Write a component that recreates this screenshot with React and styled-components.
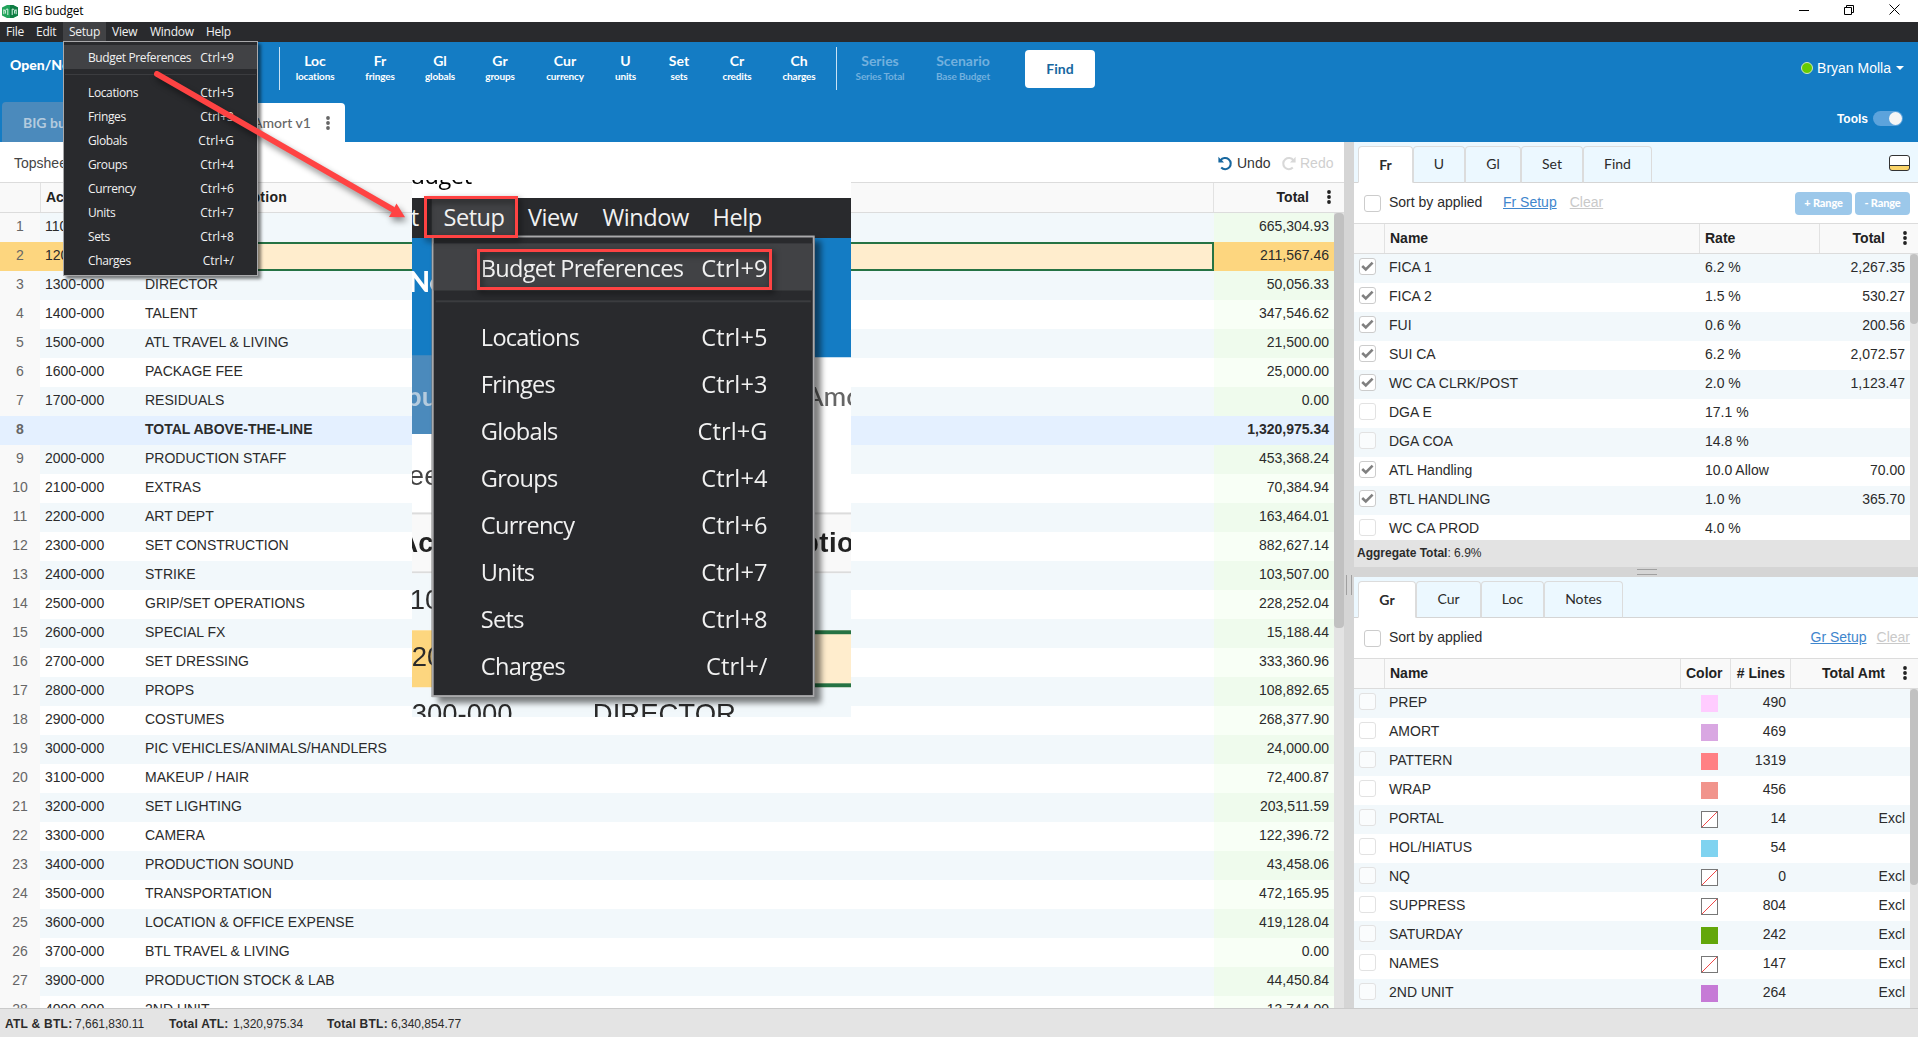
import styled, { createGlobalStyle, css } from "styled-components";

//data
const menuItems = [
  ["Locations", "Ctrl+5"],
  ["Fringes", "Ctrl+3"],
  ["Globals", "Ctrl+G"],
  ["Groups", "Ctrl+4"],
  ["Currency", "Ctrl+6"],
  ["Units", "Ctrl+7"],
  ["Sets", "Ctrl+8"],
  ["Charges", "Ctrl+/"],
];

const shortcuts = [
  ["Loc", "locations", 40],
  ["Fr", "fringes", 30],
  ["Gl", "globals", 30],
  ["Gr", "groups", 30],
  ["Cur", "currency", 40],
  ["U", "units", 21],
  ["Set", "sets", 26],
  ["Cr", "credits", 30],
  ["Ch", "charges", 34],
];

const accounts = [
  ["1100-000", "STORY", "665,304.93"],
  ["1200-000", "PRODUCER", "211,567.46"],
  ["1300-000", "DIRECTOR", "50,056.33"],
  ["1400-000", "TALENT", "347,546.62"],
  ["1500-000", "ATL TRAVEL & LIVING", "21,500.00"],
  ["1600-000", "PACKAGE FEE", "25,000.00"],
  ["1700-000", "RESIDUALS", "0.00"],
  ["", "TOTAL ABOVE-THE-LINE", "1,320,975.34"],
  ["2000-000", "PRODUCTION STAFF", "453,368.24"],
  ["2100-000", "EXTRAS", "70,384.94"],
  ["2200-000", "ART DEPT", "163,464.01"],
  ["2300-000", "SET CONSTRUCTION", "882,627.14"],
  ["2400-000", "STRIKE", "103,507.00"],
  ["2500-000", "GRIP/SET OPERATIONS", "228,252.04"],
  ["2600-000", "SPECIAL FX", "15,188.44"],
  ["2700-000", "SET DRESSING", "333,360.96"],
  ["2800-000", "PROPS", "108,892.65"],
  ["2900-000", "COSTUMES", "268,377.90"],
  ["3000-000", "PIC VEHICLES/ANIMALS/HANDLERS", "24,000.00"],
  ["3100-000", "MAKEUP / HAIR", "72,400.87"],
  ["3200-000", "SET LIGHTING", "203,511.59"],
  ["3300-000", "CAMERA", "122,396.72"],
  ["3400-000", "PRODUCTION SOUND", "43,458.06"],
  ["3500-000", "TRANSPORTATION", "472,165.95"],
  ["3600-000", "LOCATION & OFFICE EXPENSE", "419,128.04"],
  ["3700-000", "BTL TRAVEL & LIVING", "0.00"],
  ["3900-000", "PRODUCTION STOCK & LAB", "44,450.84"],
  ["4000-000", "2ND UNIT", "13,744.00"],
];

const fringes = [
  [true, "FICA 1", "6.2 %", "2,267.35"],
  [true, "FICA 2", "1.5 %", "530.27"],
  [true, "FUI", "0.6 %", "200.56"],
  [true, "SUI CA", "6.2 %", "2,072.57"],
  [true, "WC CA CLRK/POST", "2.0 %", "1,123.47"],
  [false, "DGA E", "17.1 %", ""],
  [false, "DGA COA", "14.8 %", ""],
  [true, "ATL Handling", "10.0 Allow", "70.00"],
  [true, "BTL HANDLING", "1.0 %", "365.70"],
  [false, "WC CA PROD", "4.0 %", ""],
];

const groups = [
  ["PREP", "#ffccff", "490", ""],
  ["AMORT", "#d9a7e2", "469", ""],
  ["PATTERN", "#ff8084", "1319", ""],
  ["WRAP", "#f1948c", "456", ""],
  ["PORTAL", null, "14", "Excl"],
  ["HOL/HIATUS", "#7fd3f0", "54", ""],
  ["NQ", null, "0", "Excl"],
  ["SUPPRESS", null, "804", "Excl"],
  ["SATURDAY", "#63a70a", "242", "Excl"],
  ["NAMES", null, "147", "Excl"],
  ["2ND UNIT", "#c67ad6", "264", "Excl"],
];

//styles
const GlobalStyle = createGlobalStyle`
  * {
    box-sizing: border-box;
  }
  body {
    margin: 0;
    overflow: hidden;
    font-family: "Liberation Sans", Arial, sans-serif;
    font-size: 14px;
    color: #2b2b2b;
  }
`;

const Screen = styled.div`
  position: relative;
  display: flex;
  flex-direction: column;
  width: 1918px;
  height: 1037px;
  overflow: hidden;
  background: #fff;
`;

const TitleBar = styled.div`
  display: flex;
  align-items: center;
  height: 22px;
  flex: none;
  padding-left: 2px;
  background: #fff;
  color: #000;
  font-family: "Open Sans", sans-serif;
  font-size: 12px;
  letter-spacing: -0.22px;
  white-space: nowrap;
  svg {
    display: block;
  }
`;

const TitleText = styled.span`
  margin-left: 5px;
  line-height: 22px;
`;

const WindowControls = styled.div`
  display: flex;
  align-items: center;
  gap: 35px;
  margin: 0 18px 3px auto;
`;

const MenuBarRow = styled.div`
  position: relative;
  z-index: 5;
  display: flex;
  height: 20px;
  flex: none;
  background: #292a2d;
  color: #f1f1f1;
  font-family: "Open Sans", sans-serif;
  font-size: 12px;
  letter-spacing: -0.25px;
`;

const MenuBarItem = styled.div`
  width: ${(p) => p.$w}px;
  padding-left: 6px;
  line-height: 19px;
  white-space: nowrap;
  background: ${(p) => (p.$open ? "#414245" : "transparent")};
`;

const MenuBox = styled.div`
  position: absolute;
  left: 63px;
  top: 19px;
  width: 195px;
  height: 235px;
  padding-top: 3px;
  border: 1px solid #a9a9ab;
  background: #292a2d;
  box-shadow: 3px 3px 3px rgba(0, 0, 0, 0.5);
`;

const MenuRow = styled.div`
  display: flex;
  justify-content: space-between;
  height: 24px;
  padding: 0 23px 0 24px;
  line-height: 25px;
  letter-spacing: -0.38px;
  white-space: nowrap;
  background: ${(p) => (p.$active ? "#414245" : "transparent")};
  span:last-child {
    letter-spacing: 0.05px;
  }
`;

const MenuRule = styled.div`
  height: 1px;
  margin: 5px 1px;
  background: #3b3c3f;
`;

const Header = styled.header`
  display: flex;
  flex-direction: column;
  justify-content: space-between;
  height: 100px;
  flex: none;
  background: #147cc4;
  color: #fff;
  font-family: Lato, sans-serif;
`;

const ToolRow = styled.div`
  display: flex;
  padding-top: 5px;
`;

const OpenNew = styled.div`
  width: 279px;
  height: 43px;
  flex: none;
  padding-left: 10px;
  line-height: 36px;
  font-size: 14px;
  font-weight: 900;
`;

const Tools = styled.div`
  display: flex;
  gap: 30px;
  padding: 0 20px 0 15px;
  height: 43px;
  border-left: 1px solid #c9e2f4;
  ${(p) =>
    p.$dim &&
    css`
      padding: 0 35px 0 17px;
      color: #72b0de;
    `}
`;

const Tool = styled.div`
  display: flex;
  flex-direction: column;
  align-items: center;
  width: ${(p) => p.$w}px;
  padding-top: 5px;
  white-space: nowrap;
  b {
    font-size: 14px;
    line-height: 18px;
  }
  span {
    font-size: 10px;
    line-height: 13px;
    font-weight: 700;
    letter-spacing: -0.15px;
  }
`;

const FindButton = styled.button`
  width: 70px;
  height: 38px;
  margin-top: 3px;
  padding: 0 0 2px;
  border: 0;
  border-radius: 4px;
  background: #fff;
  color: #17679f;
  font: 700 14px Lato, sans-serif;
`;

const User = styled.div`
  display: flex;
  align-items: center;
  gap: 5px;
  height: 20px;
  margin: 11px 14px 0 auto;
  font-family: "Liberation Sans", sans-serif;
  font-size: 14px;
`;

const Dot = styled.i`
  width: 12px;
  height: 12px;
  margin-right: -1px;
  border: 1px solid #cfe8c0;
  border-radius: 50%;
  background: #66cc00;
`;

const Caret = styled.i`
  border: 4px solid transparent;
  border-top: 4px solid #fff;
  border-bottom: 0;
`;

const TabRow = styled.div`
  display: flex;
  align-items: flex-end;
  padding-left: 2px;
`;

const BudgetTab = styled.div`
  display: flex;
  flex: none;
  justify-content: space-between;
  align-items: center;
  width: ${(p) => p.$w}px;
  height: ${(p) => (p.$active ? 39 : 40)}px;
  padding: 0 15px 0 ${(p) => p.$pad}px;
  border-radius: 4px 4px 0 0;
  background: ${(p) => (p.$active ? "#fff" : "#4b8abc")};
  color: ${(p) => (p.$active ? "#666" : "#b4cbde")};
  font-size: 14px;
  font-weight: ${(p) => (p.$active ? 500 : 700)};
  white-space: nowrap;
`;

const ToolsSwitch = styled.div`
  display: flex;
  align-items: center;
  gap: 5px;
  margin: 0 15px 16px auto;
  font: bold 12px "Liberation Sans", sans-serif;
`;

const Switch = styled.span`
  display: flex;
  justify-content: flex-end;
  width: 30px;
  height: 15px;
  padding: 1px;
  border-radius: 8px;
  background: #5ca3dc;
  &::after {
    content: "";
    width: 13px;
    height: 13px;
    border-radius: 50%;
    background: #f5f5f5;
  }
`;

const Main = styled.main`
  display: flex;
  height: 866px;
  flex: none;
`;

const Ledger = styled.section`
  width: ${(p) => p.$w}px;
  flex: none;
  height: 866px;
  overflow: hidden;
`;

const LedgerTop = styled.div`
  display: flex;
  align-items: center;
  height: 40px;
  padding: 2px 10px 0 14px;
  color: #444;
`;

const History = styled.span`
  display: flex;
  align-items: center;
  gap: 4px;
  width: ${(p) => p.$w}px;
  color: ${(p) => (p.$off ? "#cfcfcf" : "#333")};
  &:first-of-type {
    margin-left: auto;
  }
`;

const TableBody = styled.div`
  display: flex;
  height: ${(p) => p.$h}px;
  overflow: hidden;
`;

const Rows = styled.div`
  flex: 1;
`;

const Scroll = styled.div`
  width: ${(p) => p.$w}px;
  background: #e3e3e3;
  &::before {
    content: "";
    display: block;
    height: ${(p) => p.$thumb}px;
    border-radius: 4px;
    background: #c1c1c1;
  }
`;

const headRow = css`
  display: grid;
  height: 31px;
  border-top: 1px solid #dcdcdc;
  border-bottom: 1px solid #dcdcdc;
  background: #f9f9f9;
  font-weight: bold;
  color: #222;
`;

const HeadCell = styled.div`
  display: flex;
  align-items: center;
  justify-content: ${(p) => (p.$right ? "flex-end" : "flex-start")};
  gap: 18px;
  padding: 0 ${(p) => p.$pr ?? 5}px 1px 5px;
  border-right: 1px solid #e2e2e2;
  letter-spacing: ${(p) => p.$ls ?? 0}px;
  white-space: nowrap;
  &:last-child {
    border-right: 0;
  }
`;

const ledgerCols = css`
  grid-template-columns: 40px 100px 1fr ${(p) => (p.$narrow ? "" : "120px")};
`;

const LedgerHead = styled.div`
  ${headRow}
  grid-template-columns: 41px 99px 1fr ${(p) => (p.$narrow ? "" : "130px")};
`;

const LedgerRow = styled.div`
  display: grid;
  ${ledgerCols}
  height: 29px;
  line-height: 26px;
  background: ${(p) => (p.$odd ? "#f2f8fb" : "#fff")};
  > div {
    padding: 0 5px;
    white-space: nowrap;
    overflow: hidden;
  }
  > div:nth-child(1) {
    padding: 0;
    text-align: center;
    color: #666;
    background: #f9f9f9;
  }
  > div:nth-child(4) {
    text-align: right;
    background: ${(p) => (p.$odd ? "#effbed" : "#f8fff6")};
  }
  ${(p) =>
    p.$total &&
    css`
      font-weight: bold;
      > div:nth-child(n) {
        background: #e4f0ff;
      }
    `}
  ${(p) =>
    p.$picked &&
    css`
      > div:nth-child(n) {
        background: #fdd67f;
      }
      > div:nth-child(3) {
        padding-left: 3px;
        border: 2px solid #267344;
        line-height: 22px;
        background: #ffedcd;
      }
    `}
`;

const VSplit = styled.div`
  display: flex;
  justify-content: center;
  align-items: flex-start;
  width: 10px;
  flex: none;
  padding-top: 433px;
  background: #d5d5d5;
  &::before {
    content: "";
    width: 4px;
    height: 20px;
    border: solid #a0a0a0;
    border-width: 0 1px;
  }
`;

const HSplit = styled.div`
  display: flex;
  justify-content: center;
  align-items: center;
  height: 10px;
  padding-left: 22px;
  background: #d5d5d5;
  &::before {
    content: "";
    width: 20px;
    height: 4px;
    border: solid #a0a0a0;
    border-width: 1px 0;
  }
`;

const Side = styled.aside`
  width: 564px;
  height: 866px;
  overflow: hidden;
`;

const SideTabs = styled.div`
  display: flex;
  align-items: flex-end;
  height: 41px;
  padding-left: 4px;
  background: #ecf8ff;
  box-shadow: inset 0 -1px #d5d5d5;
  font-family: Lato, sans-serif;
`;

const SideTab = styled.div`
  width: ${(p) => p.$w}px;
  height: 37px;
  border: 1px solid #dcdcdc;
  border-radius: 4px 4px 0 0;
  border-bottom-color: ${(p) => (p.$active ? "#fff" : "#d5d5d5")};
  background: ${(p) => (p.$active ? "#fff" : "transparent")};
  font-weight: ${(p) => (p.$active ? 700 : 400)};
  line-height: ${(p) => (p.$active ? 35 : 34)}px;
  text-align: center;
`;

const LayoutIcon = styled.div`
  width: 21px;
  height: 16px;
  margin: 0 8px 12px auto;
  border: 1px solid #333;
  border-radius: 3px;
  background: linear-gradient(#fff 9px, #333 9px, #333 10px, #fbd468 10px);
`;

const SortRow = styled.div`
  display: flex;
  align-items: center;
  height: 40px;
  padding: 0 8px 0 10px;
  white-space: nowrap;
`;

const SortLabel = styled.span`
  width: 114px;
  margin-left: 8px;
  padding-bottom: 2px;
`;

const TextLink = styled.span`
  margin-left: ${(p) => p.$ml};
  padding-bottom: 2px;
  color: ${(p) => (p.$off ? "#c9c9c9" : "#3f86cd")};
  text-decoration: underline;
`;

const RangeButton = styled.button`
  width: ${(p) => p.$w}px;
  height: 23px;
  margin-left: ${(p) => p.$ml};
  padding: 0 0 1px;
  border: 0;
  border-radius: 4px;
  background: #9cc8ea;
  color: #fff;
  font: 900 11px Lato, sans-serif;
  letter-spacing: -0.15px;
`;

const Check = styled.span`
  display: flex;
  align-items: center;
  justify-content: center;
  width: 17px;
  height: 17px;
  flex: none;
  border: 1px solid ${(p) => (p.$strong ? "#ccc" : "#e2e2e2")};
  border-radius: 3px;
  background: ${(p) => (p.$strong ? "#fff" : "rgba(255, 255, 255, 0.6)")};
`;

const SideHead = styled.div`
  ${headRow}
  grid-template-columns: ${(p) => p.$cols};
`;

const SideRow = styled.div`
  display: grid;
  grid-template-columns: ${(p) => p.$cols};
  height: 29px;
  line-height: 26px;
  white-space: nowrap;
  &:nth-child(odd) {
    background: #f2f8fb;
  }
`;

const Cell = styled.div`
  padding: ${(p) => p.$pad ?? "0 5px"};
  text-align: ${(p) => (p.$right ? "right" : "left")};
`;

const Swatch = styled.i`
  display: block;
  width: 17px;
  height: 17px;
  background: ${(p) =>
    p.$color ??
    "linear-gradient(to bottom right, #fff 47%, #f04848 48%, #f04848 52%, #fff 53%)"};
  border: ${(p) => (p.$color ? "0" : "1px solid #777")};
`;

const Aggregate = styled.div`
  height: 27px;
  padding-left: 3px;
  line-height: 26px;
  font-size: 12px;
  background: #e3e3e3;
`;

const StatusBar = styled.footer`
  display: flex;
  height: 29px;
  flex: none;
  padding-left: 5px;
  border-top: 1px solid #cbcbcb;
  background: #e4e4e4;
  font-size: 12px;
  line-height: 30px;
`;

const Stat = styled.div`
  display: flex;
  width: ${(p) => p.$w}px;
  b {
    width: ${(p) => p.$label}px;
    letter-spacing: 0.25px;
  }
`;

const Callout = styled.div`
  position: absolute;
  left: 412px;
  top: 180px;
  width: 439px;
  height: 537px;
  overflow: hidden;
  background: #fff;
`;

const Magnified = styled.div`
  width: 277px;
  height: 287px;
  margin: -25.5px 0 0 -104px;
  overflow: hidden;
  transform: scale(1.964);
  transform-origin: 0 0;
`;

const RedBox = styled.div`
  position: absolute;
  left: ${(p) => p.$x}px;
  top: ${(p) => p.$y}px;
  width: ${(p) => p.$w}px;
  height: ${(p) => p.$h}px;
  border: 3px solid #ff4343;
  filter: drop-shadow(2px 3px 3px rgba(0, 0, 0, 0.6));
`;

const ArrowSvg = styled.svg`
  position: absolute;
  left: 140px;
  top: 60px;
  z-index: 6;
  filter: drop-shadow(2px 4px 3px rgba(0, 0, 0, 0.45));
`;

//icons
const AppLogo = () => (
  <svg width="16" height="13" viewBox="0 0 16 13">
    <path d="M0 2.5 5 0h6l5 2.5v8L11 13H5L0 10.5z" fill="#21a35b" />
    <path d="M8 0h3l5 2.5v8L11 13H8z" fill="#0f7c43" />
    <path
      d="M1.8 9.2V4.6l1.4 1.2 1.2-1.6 1.4-.2v6M10.2 10V4l1.4.2 1.2 1.6 1.4-1.2v4.6M3.4 6v2.6M12.6 6v2.6"
      fill="none"
      stroke="#d8f2e2"
      strokeWidth="1"
    />
  </svg>
);

const Dots = ({ color = "#222" }) => (
  <svg width="4" height="14" viewBox="0 0 4 14" fill={color}>
    <circle cx="2" cy="2" r="1.9" />
    <circle cx="2" cy="7" r="1.9" />
    <circle cx="2" cy="12" r="1.9" />
  </svg>
);

const TurnIcon = ({ color, flip }) => (
  <svg width="15" height="15" viewBox="0 0 15 15">
    <g transform={flip ? "translate(15 0) scale(-1 1)" : undefined}>
      <path
        d="M2.6 4.3A5.6 5.6 0 1 1 3.2 11.6"
        fill="none"
        stroke={color}
        strokeWidth="2.1"
      />
      <path d="M.4.8v5.6H6L4.2 4.6 2.2 2.7z" fill={color} />
    </g>
  </svg>
);

const Tick = () => (
  <svg width="13" height="11" viewBox="0 0 13 11">
    <path
      d="M1.2 5 4.8 8.4 11.6 1.6"
      fill="none"
      stroke="#808080"
      strokeWidth="2.6"
    />
  </svg>
);

//components
const MenuBar = () => (
  <MenuBarRow>
    <MenuBarItem $w={30}>File</MenuBarItem>
    <MenuBarItem $w={33}>Edit</MenuBarItem>
    <MenuBarItem $w={43} $open>
      Setup
    </MenuBarItem>
    <MenuBarItem $w={38}>View</MenuBarItem>
    <MenuBarItem $w={56}>Window</MenuBarItem>
    <MenuBarItem $w={40}>Help</MenuBarItem>
    <MenuBox>
      <MenuRow $active>
        <span>Budget Preferences</span>
        <span>Ctrl+9</span>
      </MenuRow>
      <MenuRule />
      {menuItems.map(([name, keys]) => (
        <MenuRow key={name}>
          <span>{name}</span>
          <span>{keys}</span>
        </MenuRow>
      ))}
    </MenuBox>
  </MenuBarRow>
);

const WindowTop = ({ narrow }) => (
  <>
    <TitleBar>
      <AppLogo />
      <TitleText>BIG budget</TitleText>
      {!narrow && (
        <WindowControls>
          <svg width="10" height="10">
            <path d="M0 5.5h10" stroke="#000" />
          </svg>
          <svg width="10" height="10" fill="none" stroke="#000">
            <path d="M.5 2.5h7v7h-7zM2.5 2.5v-2h7v7h-2" />
          </svg>
          <svg width="11" height="11">
            <path d="M.5.5l10 10M10.5.5l-10 10" stroke="#000" />
          </svg>
        </WindowControls>
      )}
    </TitleBar>
    <MenuBar />
    <Header>
      <ToolRow>
        <OpenNew>Open/New</OpenNew>
        {!narrow && (
          <>
            <Tools>
              {shortcuts.map(([code, label, w]) => (
                <Tool key={code} $w={w}>
                  <b>{code}</b>
                  <span>{label}</span>
                </Tool>
              ))}
            </Tools>
            <Tools $dim>
              <Tool $w={52}>
                <b>Series</b>
                <span>Series Total</span>
              </Tool>
              <Tool $w={54}>
                <b>Scenario</b>
                <span>Base Budget</span>
              </Tool>
            </Tools>
            <FindButton>Find</FindButton>
            <User>
              <Dot />
              Bryan Molla
              <Caret />
            </User>
          </>
        )}
      </ToolRow>
      <TabRow>
        <BudgetTab $w={150} $pad={21}>
          BIG budget
        </BudgetTab>
        <BudgetTab $active $w={193} $pad={101}>
          Amort v1
          {!narrow && <Dots color="#666" />}
        </BudgetTab>
        {!narrow && (
          <ToolsSwitch>
            Tools
            <Switch />
          </ToolsSwitch>
        )}
      </TabRow>
    </Header>
  </>
);

const LedgerPane = ({ rows, narrow }) => (
  <Ledger $w={narrow ? 400 : 1344}>
    <LedgerTop>
      Topsheet
      {!narrow && (
        <>
          <History $w={63}>
            <TurnIcon color="#17679f" />
            Undo
          </History>
          <History $w={53} $off>
            <TurnIcon color="#d8d8d8" flip />
            Redo
          </History>
        </>
      )}
    </LedgerTop>
    <LedgerHead $narrow={narrow}>
      <HeadCell />
      <HeadCell>Account</HeadCell>
      <HeadCell $ls={0.27}>Account Description</HeadCell>
      {!narrow && (
        <HeadCell $right $pr={13}>
          Total
          <Dots />
        </HeadCell>
      )}
    </LedgerHead>
    <TableBody $h={795}>
      <Rows>
        {rows.map(([account, name, total], i) => (
          <LedgerRow
            key={name}
            $narrow={narrow}
            $odd={i % 2 === 0}
            $picked={i === 1}
            $total={!account}
          >
            <div>{i + 1}</div>
            <div>{account}</div>
            <div>{name}</div>
            {!narrow && <div>{total}</div>}
          </LedgerRow>
        ))}
      </Rows>
      {!narrow && <Scroll $w={10} $thumb={415} />}
    </TableBody>
  </Ledger>
);

const fringeCols = "31px 315px 120px 1fr";
const groupCols = "31px 296px 50px 60px 1fr";

const FringePanel = () => (
  <>
    <SideTabs>
      <SideTab $w={55} $active>
        Fr
      </SideTab>
      <SideTab $w={52}>U</SideTab>
      <SideTab $w={56}>Gl</SideTab>
      <SideTab $w={62}>Set</SideTab>
      <SideTab $w={69}>Find</SideTab>
      <LayoutIcon />
    </SideTabs>
    <SortRow>
      <Check $strong />
      <SortLabel>Sort by applied</SortLabel>
      <TextLink $ml="0">Fr Setup</TextLink>
      <TextLink $ml="13px" $off>
        Clear
      </TextLink>
      <RangeButton $w={57} $ml="auto">
        + Range
      </RangeButton>
      <RangeButton $w={55} $ml="3px">
        - Range
      </RangeButton>
    </SortRow>
    <SideHead $cols={fringeCols}>
      <HeadCell />
      <HeadCell>Name</HeadCell>
      <HeadCell>Rate</HeadCell>
      <HeadCell $right $pr={11}>
        Total
        <Dots />
      </HeadCell>
    </SideHead>
    <TableBody $h={286}>
      <Rows>
        {fringes.map(([on, name, rate, total]) => (
          <SideRow key={name} $cols={fringeCols}>
            <Cell $pad="4px 5px">
              <Check $strong={on}>{on && <Tick />}</Check>
            </Cell>
            <Cell $pad="0 4px">{name}</Cell>
            <Cell>{rate}</Cell>
            <Cell $right>{total}</Cell>
          </SideRow>
        ))}
      </Rows>
      <Scroll $w={8} $thumb={70} />
    </TableBody>
    <Aggregate>
      <b>Aggregate Total</b>: 6.9%
    </Aggregate>
  </>
);

const GroupPanel = () => (
  <>
    <SideTabs>
      <SideTab $w={58} $active>
        Gr
      </SideTab>
      <SideTab $w={65}>Cur</SideTab>
      <SideTab $w={63}>Loc</SideTab>
      <SideTab $w={79}>Notes</SideTab>
    </SideTabs>
    <SortRow>
      <Check $strong />
      <SortLabel>Sort by applied</SortLabel>
      <TextLink $ml="auto">Gr Setup</TextLink>
      <TextLink $ml="10px" $off>
        Clear
      </TextLink>
    </SortRow>
    <SideHead $cols={groupCols}>
      <HeadCell />
      <HeadCell>Name</HeadCell>
      <HeadCell>Color</HeadCell>
      <HeadCell $right># Lines</HeadCell>
      <HeadCell $right $pr={11}>
        Total Amt
        <Dots />
      </HeadCell>
    </SideHead>
    <TableBody $h={319}>
      <Rows>
        {groups.map(([name, color, lines, amount]) => (
          <SideRow key={name} $cols={groupCols}>
            <Cell $pad="4px 5px">
              <Check />
            </Cell>
            <Cell $pad="0 4px">{name}</Cell>
            <Cell $pad="6px 0 0 20px">
              <Swatch $color={color} />
            </Cell>
            <Cell $right>{lines}</Cell>
            <Cell $right>{amount}</Cell>
          </SideRow>
        ))}
      </Rows>
      <Scroll $w={8} $thumb={196} />
    </TableBody>
  </>
);

export default function App() {
  return (
    <>
      <GlobalStyle />
      <Screen>
        <WindowTop />
        <Main>
          <LedgerPane rows={accounts} />
          <VSplit />
          <Side>
            <FringePanel />
            <HSplit />
            <GroupPanel />
          </Side>
        </Main>
        <StatusBar>
          <Stat $w={164} $label={70}>
            <b>ATL & BTL:</b>7,661,830.11
          </Stat>
          <Stat $w={158} $label={64}>
            <b>Total ATL:</b>1,320,975.34
          </Stat>
          <Stat $w={158} $label={64}>
            <b>Total BTL:</b>6,340,854.77
          </Stat>
        </StatusBar>

        {/* enlarged view of the Setup menu */}
        <Callout>
          <Magnified>
            <WindowTop narrow />
            <LedgerPane rows={accounts.slice(0, 3)} narrow />
          </Magnified>
        </Callout>
        <RedBox $x={424} $y={196} $w={94} $h={42} />
        <RedBox $x={477} $y={249} $w={295} $h={41} />
        <ArrowSvg width="280" height="170">
          <path
            d="M17 14 252 149"
            stroke="#ff4343"
            strokeWidth="6"
            strokeLinecap="round"
          />
          <path d="M265 157.3 256.5 143.5 249 157z" fill="#ff4343" />
        </ArrowSvg>
      </Screen>
    </>
  );
}
